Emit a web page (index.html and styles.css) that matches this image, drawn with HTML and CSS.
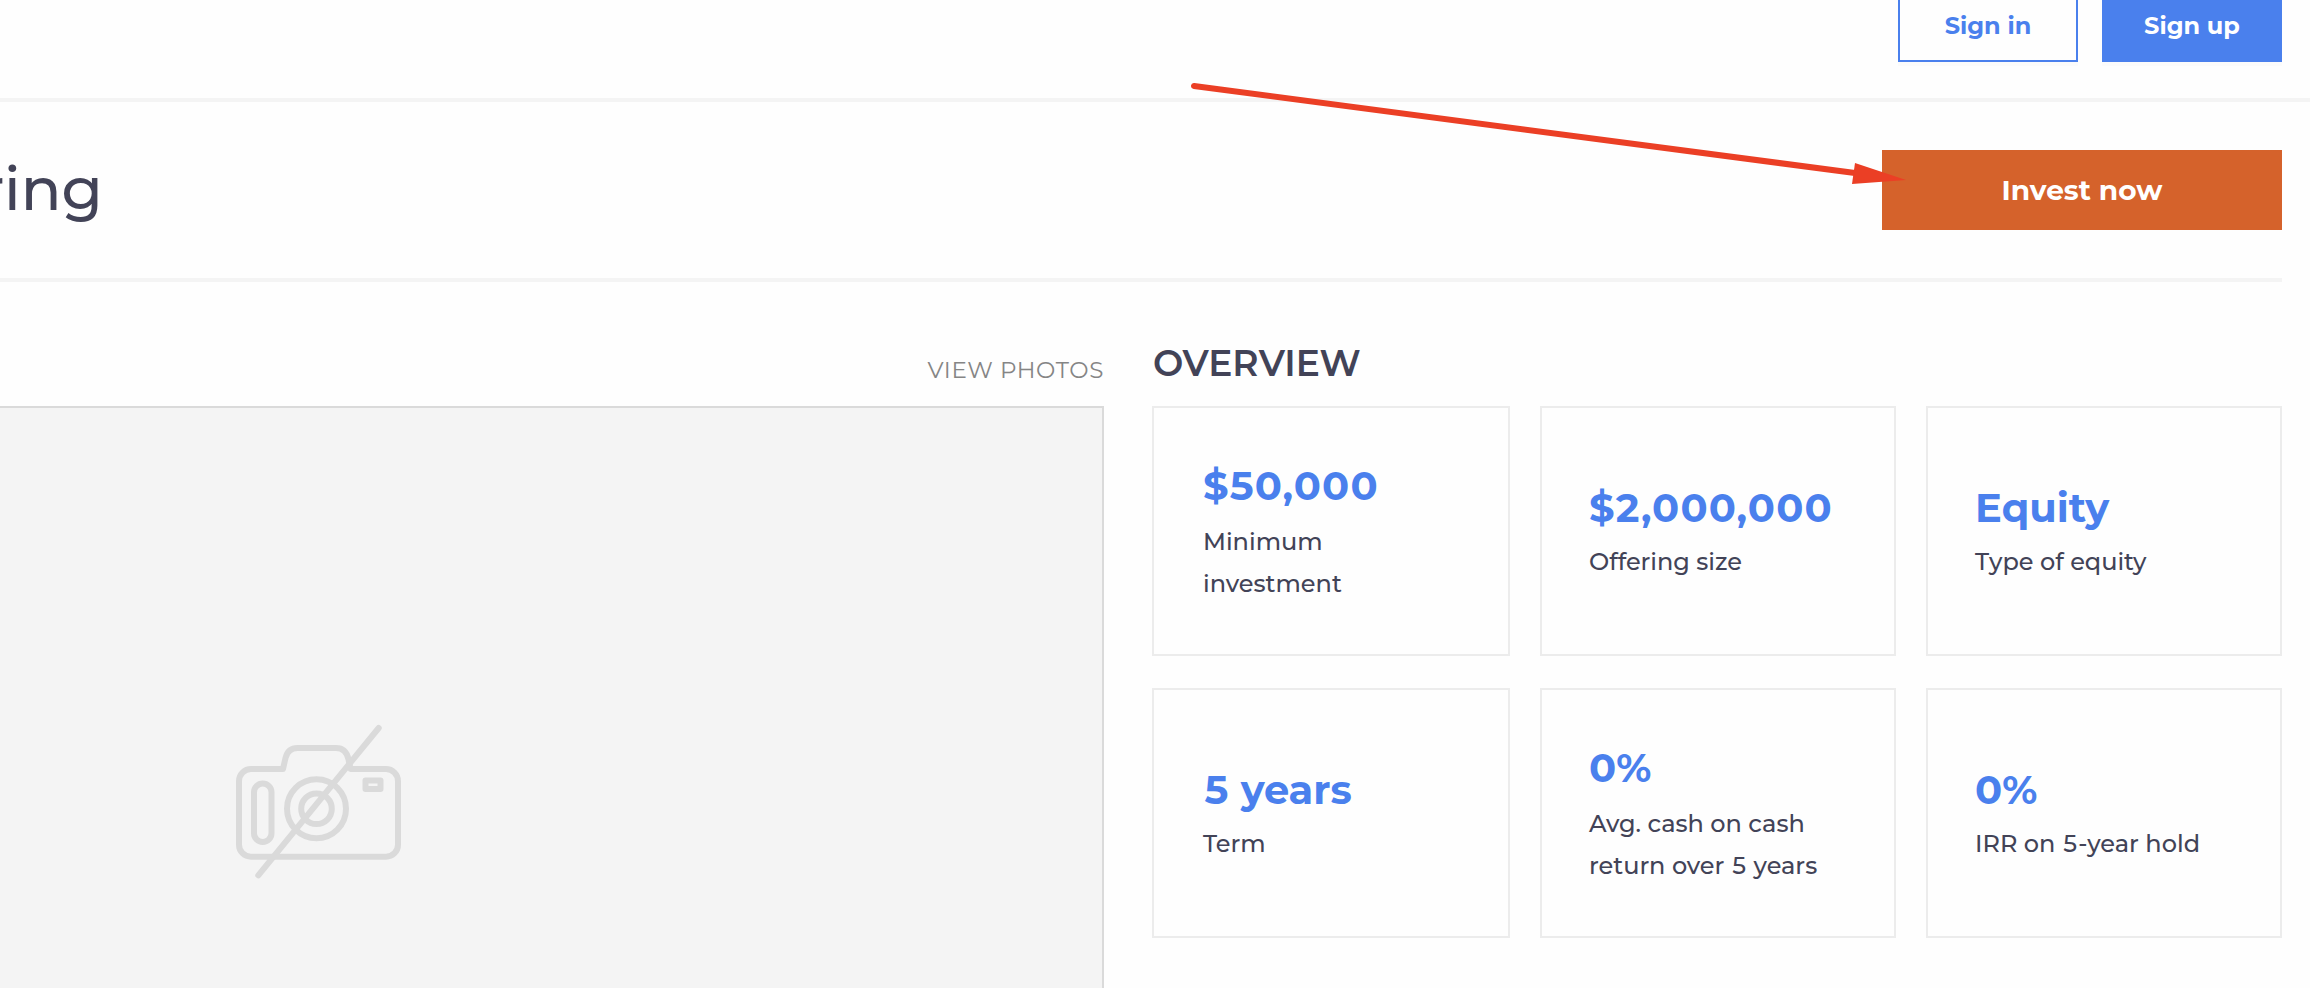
FILE: index.html
```
<!DOCTYPE html>
<html lang="en">
<head>
    <meta charset="UTF-8">
    <meta name="viewport" content="width=device-width, initial-scale=1.0">
    <title>Offering</title>
    <link rel="stylesheet" href="styles.css">
</head>
<body>
    <header class="topbar">
        <a class="btn btn-outline">Sign in</a>
        <a class="btn btn-primary">Sign up</a>
    </header>

    <div class="hero">
        <h1 class="hero-title">ring</h1>
        <a class="invest-btn">Invest now</a>
    </div>

    <main class="content">
        <section class="gallery">
            <div class="section-top">
                <a class="view-photos">VIEW PHOTOS</a>
            </div>
            <div class="photo-placeholder">
                <!-- No photo icon -->
                <svg class="camera-icon" viewBox="0 0 176 160" fill="none" stroke="#dadada" stroke-width="6">
                    <path d="M53 49H21a12 12 0 0 0-12 12v63.700a12 12 0 0 0 12 12H156a12 12 0 0 0 12-12V61a12 12 0 0 0-12-12H120.500L118.500 39.500C117 32 112.500 28 106 28H67.500C60.500 28 57 32 55.500 38Z" stroke-linejoin="round"/>
                    <rect x="24" y="63.500" width="17.500" height="58.500" rx="8.700"/>
                    <circle cx="86.500" cy="88.700" r="29.500"/>
                    <circle cx="86.500" cy="88.700" r="15.300"/>
                    <rect x="135.500" y="60.500" width="15" height="8.500" stroke-linejoin="round"/>
                    <path d="M28.300 155.300L148.700 8" stroke-linecap="round"/>
                </svg>
            </div>
        </section>

        <section class="overview">
            <div class="section-top">
                <h2 class="overview-title">OVERVIEW</h2>
            </div>
            <div class="stats">
                <div class="stat stat-tall">
                    <div class="stat-value amount">$50,000</div>
                    <div class="stat-label narrow">Minimum investment</div>
                </div>
                <div class="stat">
                    <div class="stat-value amount">$2,000,000</div>
                    <div class="stat-label">Offering size</div>
                </div>
                <div class="stat">
                    <div class="stat-value">Equity</div>
                    <div class="stat-label">Type of equity</div>
                </div>
                <div class="stat">
                    <div class="stat-value"><span class="digit">5</span> years</div>
                    <div class="stat-label">Term</div>
                </div>
                <div class="stat stat-tall">
                    <div class="stat-value">0%</div>
                    <div class="stat-label">Avg. cash on cash return over <span class="digit">5</span> years</div>
                </div>
                <div class="stat">
                    <div class="stat-value">0%</div>
                    <div class="stat-label">IRR on <span class="digit">5</span>-year hold</div>
                </div>
            </div>
        </section>
    </main>

    <!-- Arrow pointing at the invest button -->
    <svg class="arrow" viewBox="0 0 730 110">
        <path d="M14 16L675 103" stroke="#eb3f25" stroke-width="6" stroke-linecap="round"/>
        <path d="M675 93L726 110L672 114Z" fill="#eb3f25"/>
    </svg>
</body>
</html>
```
FILE: styles.css
```
* {
    margin: 0;
    padding: 0;
    box-sizing: border-box;
}

body {
    position: relative;
    height: 988px;
    overflow: hidden;
    background: #fefefe;
    color: #424357;
    font-family: "Montserrat", "Inter", "Open Sans", sans-serif;
}

.topbar {
    display: flex;
    justify-content: flex-end;
    align-items: flex-end;
    gap: 24px;
    height: 102px;
    padding: 0 28px 36px 0;
    border-bottom: 4px solid #f4f4f4;
}

.btn {
    flex: none;
    width: 180px;
    height: 80px;
    padding-top: 4px;
    border: 2px solid #4a80ed;
    box-shadow: 0 4px 0 rgba(0, 0, 0, 0.01);
    font-size: 24px;
    font-weight: 700;
    line-height: 76px;
    text-align: center;
}

.btn-outline {
    background: #fefefe;
    color: #4a80ed;
}

.btn-primary {
    background: #4a80ed;
    color: #fff;
}

.hero {
    display: flex;
    justify-content: space-between;
    align-items: center;
    height: 180px;
    margin-right: 28px;
    border-bottom: 4px solid #f4f4f4;
}

/* Long titles are cut on the left */
.hero-title {
    display: flex;
    justify-content: flex-end;
    width: 103px;
    padding-bottom: 3px;
    font-size: 60px;
    font-weight: 500;
}

.invest-btn {
    width: 400px;
    height: 80px;
    background: #d5622b;
    color: #fff;
    font-size: 28px;
    font-weight: 700;
    line-height: 80px;
    text-align: center;
}

.content {
    display: flex;
    gap: 48px;
    height: 706px;
    padding-right: 28px;
}

.section-top {
    display: flex;
    align-items: flex-end;
    height: 124px;
}

/* The gallery runs past the left edge of the window */
.gallery {
    flex: none;
    width: 1572px;
    margin-left: -468px;
    overflow: hidden;
}

.gallery .section-top {
    justify-content: flex-end;
    padding-bottom: 20px;
}

.view-photos {
    color: #858585;
    font-size: 23px;
    font-weight: 400;
    letter-spacing: 0.6px;
    line-height: 32px;
}

.photo-placeholder {
    display: flex;
    justify-content: center;
    align-items: center;
    height: 788px;
    background: #f4f4f4;
    border: 2px solid #dadada;
}

.camera-icon {
    width: 176px;
    height: 160px;
}

.overview {
    flex: none;
    width: 1130px;
}

.overview .section-top {
    padding-bottom: 20px;
}

.overview-title {
    padding-left: 1px;
    font-size: 36px;
    font-weight: 600;
    line-height: 46px;
}

.stats {
    display: grid;
    grid-template-columns: 358px 356px 356px;
    gap: 32px 30px;
}

.stat {
    display: flex;
    flex-direction: column;
    justify-content: center;
    height: 250px;
    padding: 0 20px 4px 47px;
    border: 2px solid #ececec;
}

.stat:nth-child(3n+1) {
    padding-left: 49px;
}

.stat-value {
    color: #4a80ed;
    font-size: 40px;
    font-weight: 700;
    line-height: 66px;
}

.amount {
    letter-spacing: 1.2px;
}

.stat-label {
    font-size: 24px;
    font-weight: 500;
    line-height: 42px;
}

.stat-tall .stat-label {
    margin-top: 2px;
}

.narrow {
    width: 200px;
}

.digit {
    padding: 0 1px 0 1.5px;
}

.arrow {
    position: absolute;
    top: 70px;
    left: 1180px;
    width: 730px;
    height: 110px;
    overflow: visible;
}
```
